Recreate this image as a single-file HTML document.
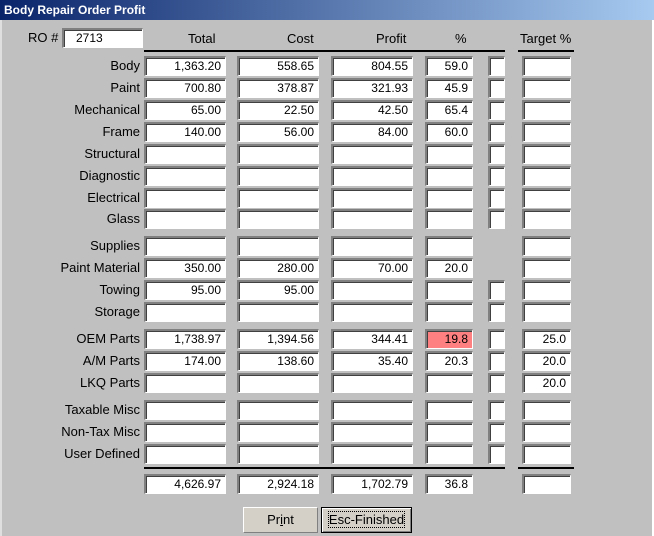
<!DOCTYPE html><html><head><style>
body{margin:0;width:654px;height:536px;background:#c0c0c0;position:relative;overflow:hidden;font-family:"Liberation Sans",Arial,sans-serif;font-size:13px;color:#000}
.t{position:absolute;left:0;top:0;width:654px;height:20px;background:linear-gradient(90deg,#0a246a,#a6caf0);color:#fff;font-weight:bold;font-size:12px;line-height:20px;padding-left:4px;box-sizing:border-box}
.f{position:absolute;height:20px;box-sizing:border-box;background:#fff;border-top:2px solid #808080;border-left:2px solid #808080;border-right:1px solid #fff;border-bottom:1px solid #fff;box-shadow:inset 1px 1px 0 #404040;text-align:right;padding-right:4px;line-height:17px;font-size:12px}
.l{position:absolute;right:514px;text-align:right;line-height:20px;white-space:nowrap}
.h{position:absolute;top:31px;line-height:16px}
.ln{position:absolute;height:2px;background:#000}
.b{position:absolute;top:507px;height:26px;box-sizing:border-box;background:#d4d0c8;text-align:center;line-height:24px;font-size:13px}
</style></head><body>
<div class="t">Body Repair Order Profit</div>
<div style="position:absolute;right:0;top:20px;width:2px;height:516px;background:#fff"></div>
<div style="position:absolute;left:0;top:20px;width:2px;height:516px;background:#dfdfdf"></div>
<div class="l" style="top:28px;left:28px;right:auto">RO #</div>
<div class="f" style="left:62px;top:28px;width:81px;text-align:left;padding-left:12px">2713</div>
<div class="h" style="left:188px">Total</div>
<div class="h" style="left:287px">Cost</div>
<div class="h" style="left:376px">Profit</div>
<div class="h" style="left:455px">%</div>
<div class="h" style="left:520px">Target %</div>
<div class="ln" style="left:144px;top:50px;width:361px"></div>
<div class="ln" style="left:518px;top:50px;width:56px"></div>
<div class="ln" style="left:144px;top:467px;width:361px"></div>
<div class="ln" style="left:518px;top:467px;width:56px"></div>
<div id="rows"></div>
<div class="b" style="left:243px;width:75px;border:1px solid #fff;border-right-color:#808080;border-bottom-color:#808080">Pr<u>i</u>nt</div>
<div class="b" style="left:321px;width:91px;border:1px solid #000;box-shadow:inset 1px 1px 0 #fff,inset -1px -1px 0 #808080"><span style="outline:1px dotted #000">Esc-Finished</span></div>
<script>
var R=[["Body",56,"1,363.20","558.65","804.55","59.0",1,""],["Paint",78,"700.80","378.87","321.93","45.9",1,""],["Mechanical",100,"65.00","22.50","42.50","65.4",1,""],["Frame",122,"140.00","56.00","84.00","60.0",1,""],["Structural",144,"","","","",1,""],["Diagnostic",166,"","","","",1,""],["Electrical",188,"","","","",1,""],["Glass",209,"","","","",1,""],["Supplies",236,"","","","",0,""],["Paint Material",258,"350.00","280.00","70.00","20.0",0,""],["Towing",280,"95.00","95.00","","",1,""],["Storage",302,"","","","",1,""],["OEM Parts",329,"1,738.97","1,394.56","344.41","19.8",1,"25.0"],["A/M Parts",351,"174.00","138.60","35.40","20.3",1,"20.0"],["LKQ Parts",373,"","","","",1,"20.0"],["Taxable Misc",400,"","","","",1,""],["Non-Tax Misc",422,"","","","",1,""],["User Defined",444,"","","","",1,""],["",474,"4,626.97","2,924.18","1,702.79","36.8",0,""]];
var h="";R.forEach(function(r){var y=r[1];
h+='<div class="l" style="top:'+y+'px">'+r[0]+'</div>';
h+='<div class="f" style="left:144px;top:'+y+'px;width:82px">'+r[2]+'</div>';
h+='<div class="f" style="left:237px;top:'+y+'px;width:82px">'+r[3]+'</div>';
h+='<div class="f" style="left:331px;top:'+y+'px;width:82px">'+r[4]+'</div>';
h+='<div class="f" style="left:425px;top:'+y+'px;width:48px'+(r[0]=="OEM Parts"?';background:#ff8080':'')+'">'+r[5]+'</div>';
if(r[6])h+='<div class="f" style="left:488px;top:'+y+'px;width:17px"></div>';
h+='<div class="f" style="left:522px;top:'+y+'px;width:49px">'+r[7]+'</div>';});
document.getElementById("rows").innerHTML=h;
</script>
</body></html>
